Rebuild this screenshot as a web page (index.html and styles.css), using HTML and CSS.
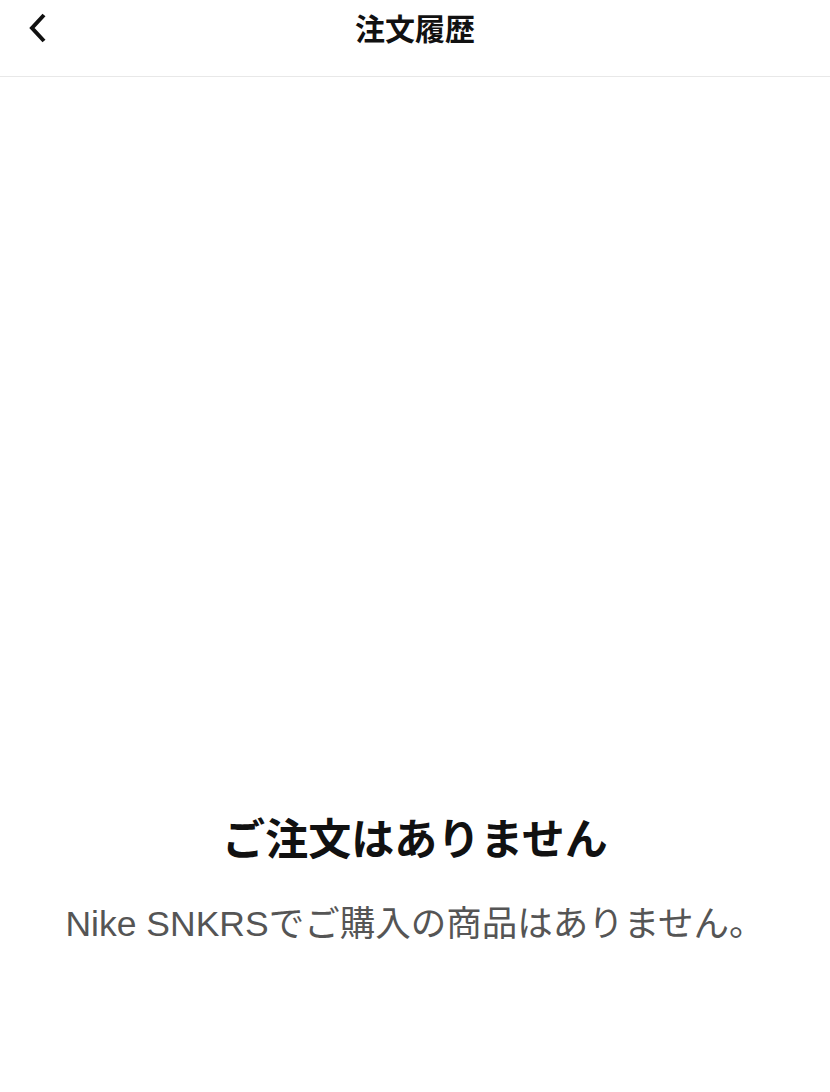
FILE: index.html
```html
<!DOCTYPE html>
<html lang="ja">

<head>
    <meta charset="UTF-8">
    <meta name="viewport" content="width=device-width, initial-scale=1.0">
    <title>注文履歴</title>
    <link rel="stylesheet" href="styles.css">
</head>

<body>
    <div class="navbar">
        <button class="back-button" type="button" aria-label="戻る">
            <svg width="24" height="30" viewBox="0 0 24 30">
                <path d="M19 2 L7 15 L19 28" fill="none" stroke="#111" stroke-width="4" stroke-linecap="butt" stroke-linejoin="miter"/>
            </svg>
        </button>
        <h1>注文履歴</h1>
    </div>

    <div class="empty-container">
        <h2>ご注文はありません</h2>
        <p>Nike SNKRSでご購入の商品はありません。</p>
    </div>
</body>

</html>
```

FILE: styles.css
```css
body {
    font-family: "Liberation Sans", "Noto Sans CJK JP", sans-serif;
    background-color: #fff;
    color: #111;
    margin: 0;
    padding: 0;
}

.navbar {
    position: relative;
    height: 76px;
    border-bottom: 1px solid #e8e8e8;
    display: flex;
    align-items: flex-start;
    justify-content: center;
}

.navbar h1 {
    margin: 0;
    margin-top: 5px;
    font-family: "Noto Sans CJK JP", sans-serif;
    font-size: 30px;
    line-height: 44px;
    font-weight: bold;
}

.back-button {
    position: absolute;
    left: 25px;
    top: 13px;
    padding: 0;
    border: none;
    background: none;
}

.back-button svg {
    display: block;
}

.empty-container {
    padding-top: 731px;
    text-align: center;
}

.empty-container h2 {
    margin: 0;
    font-size: 43px;
    line-height: 64px;
    font-weight: bold;
}

.empty-container p {
    margin: 27px 0 0;
    font-size: 35.5px;
    line-height: 50px;
    color: #555;
}
```
